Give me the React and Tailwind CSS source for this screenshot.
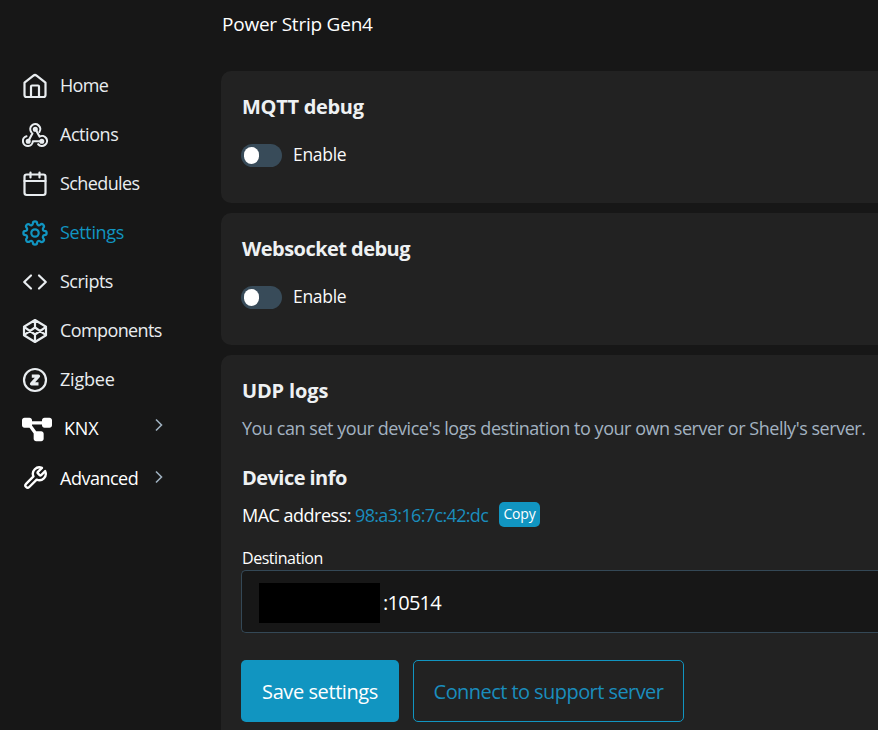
import { FaDiagramProject } from 'react-icons/fa6';

const stroke = {
  viewBox: '0 0 26 26',
  width: 26,
  height: 26,
  fill: 'none',
  stroke: 'currentColor',
  strokeWidth: 2.2,
  strokeLinecap: 'round',
  strokeLinejoin: 'round',
};

const HomeIcon = () => (
  <svg {...stroke}>
    <path d="M2.500 9.600 11.400 2.600Q13 1.400 14.600 2.600L23.500 9.600V22Q23.500 24 21.500 24H4.500Q2.500 24 2.500 22Z" />
    <path d="M9 24V13.500Q9 12.500 10 12.500H16Q17 12.500 17 13.500V24" />
  </svg>
);

const ActionsIcon = () => (
  <svg {...stroke} strokeWidth="2.100">
    <path d="M9.400 10.300A5 5 0 1 1 17.400 10" />
    <path d="M4.500 14.200A5 5 0 1 0 10.900 19.300H19.500" />
    <path d="M16.200 22.200A5 5 0 1 0 17.500 14.600L13.500 7.300" />
    <path d="M6.500 18.800 10.400 11.500" />
    <circle cx="13.300" cy="7.300" r="1.500" fill="currentColor" />
    <circle cx="6.200" cy="19.200" r="1.500" fill="currentColor" />
    <circle cx="19.800" cy="19.200" r="1.500" fill="currentColor" />
  </svg>
);

const CalendarIcon = () => (
  <svg {...stroke}>
    <rect x="2.500" y="3.500" width="21" height="20.500" rx="2.200" />
    <path d="M2.500 10H23.500M8.500 1.500V6.500M17.500 1.500V6.500" />
  </svg>
);

const GearIcon = () => (
  <svg {...stroke}>
    <circle cx="13" cy="13" r="3.700" />
    <path
      transform="translate(-.26 .03) scale(1.02)"
      d="M10.900 3.500a2.100 2.100 0 0 1 4.200 0c.2 1.500 1.700 2.100 3 1.200a2.100 2.100 0 0 1 3 3c-.9 1.300-.3 2.800 1.200 3a2.100 2.100 0 0 1 0 4.200c-1.500.2-2.100 1.700-1.200 3a2.100 2.100 0 0 1-3 3c-1.300-.9-2.800-.3-3 1.200a2.100 2.100 0 0 1-4.200 0c-.2-1.500-1.700-2.100-3-1.200a2.100 2.100 0 0 1-3-3c.9-1.300.3-2.800-1.200-3a2.100 2.100 0 0 1 0-4.200c1.500-.2 2.100-1.700 1.200-3a2.100 2.100 0 0 1 3-3c1.300.9 2.800.3 3-1.200z"
    />
  </svg>
);

const CodeIcon = () => (
  <svg {...stroke}>
    <path d="M9 6.500 2.200 13 9 19.500M17 6.500 23.800 13 17 19.500" />
  </svg>
);

const ComponentsIcon = () => (
  <svg {...stroke}>
    <path d="M13 2 24 8.800V17.200L13 24 2 17.200V8.800ZM13 2V9.500M13 24V16.500M24 8.800 13 16.500 2 8.800M2 17.200 13 9.500 24 17.200" />
  </svg>
);

const ZigbeeIcon = () => (
  <svg {...stroke}>
    <circle cx="13" cy="13" r="11" />
    <path d="M9.800 9.200H16.500L9.500 16.800H16.500" strokeWidth="3.200" strokeLinecap="butt" />
  </svg>
);

const WrenchIcon = () => (
  <svg {...stroke}>
    <g transform="translate(.2 .2) scale(1.07)">
      <path d="M14.700 6.300a1 1 0 0 0 0 1.400l1.600 1.600a1 1 0 0 0 1.400 0l3.770-3.770a6 6 0 0 1-7.940 7.940l-6.910 6.910a2.120 2.120 0 0 1-3-3l6.910-6.910a6 6 0 0 1 7.940-7.940l-3.760 3.760z" />
    </g>
  </svg>
);

const Chevron = ({ className }) => (
  <svg className={className} width="8" height="14" viewBox="0 0 8 14" fill="none" stroke="#9fb0bf" strokeWidth="1.600">
    <path d="M1 1.500 6.500 7 1 12.500" />
  </svg>
);

const items = [
  { label: 'Home', Icon: HomeIcon, text: 'tracking-[-0.65px]' },
  { label: 'Actions', Icon: ActionsIcon, text: 'tracking-[-0.45px]' },
  { label: 'Schedules', Icon: CalendarIcon, text: 'tracking-[-0.6px]' },
  { label: 'Settings', Icon: GearIcon, text: 'tracking-[-0.35px]', active: true },
  { label: 'Scripts', Icon: CodeIcon, text: 'tracking-[-0.5px]' },
  { label: 'Components', Icon: ComponentsIcon, text: 'tracking-[-0.6px]' },
  { label: 'Zigbee', Icon: ZigbeeIcon, text: 'tracking-[-0.2px]' },
];

function Sidebar() {
  return (
    <nav className="w-[221px] shrink-0 pt-[61px] pl-[22px] text-[18px] text-[#e9edf0]">
      {items.map(({ label, Icon, text, active }) => (
        <div key={label} className={active ? 'flex h-[49px] items-center gap-3 text-[#1195c1]' : 'flex h-[49px] items-center gap-3'}>
          <Icon />
          <span className={text}>{label}</span>
        </div>
      ))}
      <div className="flex h-[49px] items-center text-white">
        <FaDiagramProject className="mt-[2px] h-[27px] w-[30px]" />
        <span className="ml-3 w-[91px] tracking-[-0.2px]">KNX</span>
        <Chevron className="mb-2" />
      </div>
      <div className="flex h-[50px] items-center text-white">
        <WrenchIcon />
        <span className="ml-3 w-[95px] tracking-[-0.5px]">Advanced</span>
        <Chevron className="mb-[2px]" />
      </div>
    </nav>
  );
}

function ToggleCard({ title, titleClass }) {
  return (
    <section className="h-[132px] rounded-l-[10px] bg-[#222] pt-[22px] pl-5">
      <h2 className={titleClass}>{title}</h2>
      <label className="mt-[21px] flex h-[26px] items-center">
        <span className="flex h-[23px] w-[41px] items-center rounded-full bg-[#384b59] pl-[3px]">
          <span className="h-[17px] w-[15px] rounded-full bg-white" />
        </span>
        <span className="mb-[2px] ml-[11px] text-[17.500px] tracking-[-0.3px] text-[#fafafa]">Enable</span>
      </label>
    </section>
  );
}

export default function App() {
  return (
    <div className="flex h-[730px] w-[878px] overflow-hidden bg-[#171717] font-['Open_Sans','Noto_Sans',sans-serif] whitespace-nowrap">
      <Sidebar />
      <main className="w-[657px] shrink-0">
        <header className="h-[71px] pt-[10px] pl-px text-[19px] leading-7 tracking-[-0.22px] text-white">Power Strip Gen4</header>
        <div className="flex flex-col gap-[10px]">
          <ToggleCard title="MQTT debug" titleClass="h-7 pl-px text-[20px] leading-7 font-bold tracking-[-0.3px] text-[#eef1f3]" />
          <ToggleCard title="Websocket debug" titleClass="h-7 pl-px text-[20px] leading-7 font-bold tracking-[-0.54px] text-[#eef1f3]" />
          <section className="h-[385px] rounded-tl-[10px] bg-[#222] pt-[22px] pl-5">
            <h2 className="h-7 pl-px text-[20px] leading-7 font-bold tracking-[-0.15px] text-[#eef1f3]">UDP logs</h2>
            <p className="mt-[9px] h-7 pl-px text-[18px] leading-7 tracking-[-0.46px] text-[#a3b2c1]">
              You can set your device's logs destination to your own server or Shelly's server.
            </p>
            <h2 className="mt-[22px] h-7 pl-px text-[20px] leading-7 font-bold tracking-[-0.55px] text-[#eef1f3]">Device info</h2>
            <div className="mt-[9px] flex h-[28px] items-center text-[18px] leading-7">
              <span className="w-[114px] pl-px tracking-[-0.5px] text-white">MAC address:</span>
              <span className="w-[144px] tracking-[-0.65px] text-[#1a8dbd]">98:a3:16:7c:42:dc</span>
              <button className="mb-[2px] h-[25px] w-[41px] rounded-[5px] bg-[#1195c1] text-[14px] leading-6 tracking-[-0.2px] text-white">Copy</button>
            </div>
            <div className="mt-[18px] h-[23px] pl-px text-[16px] leading-[22px] tracking-[-0.45px] text-white">Destination</div>
            <div className="flex h-[63px] items-center rounded-l-[5px] border border-r-0 border-[#344856] bg-[#171717] pt-[2px] pl-4 text-[20px] text-white">
              <span className="ml-px h-[40px] w-[121px] bg-black" />
              <span className="ml-[3px] tracking-[-0.75px]">:10514</span>
            </div>
            <div className="mt-[27px] flex gap-[14px] text-[20px]">
              <button className="h-[62px] w-[158px] rounded-[5px] bg-[#1195c1] pt-[2px] tracking-[-0.42px] text-white">Save settings</button>
              <button className="h-[62px] w-[271px] rounded-[5px] border border-[#1195c1] pt-[2px] tracking-[-0.56px] text-[#1a8dbd]">Connect to support server</button>
            </div>
          </section>
        </div>
      </main>
    </div>
  );
}
